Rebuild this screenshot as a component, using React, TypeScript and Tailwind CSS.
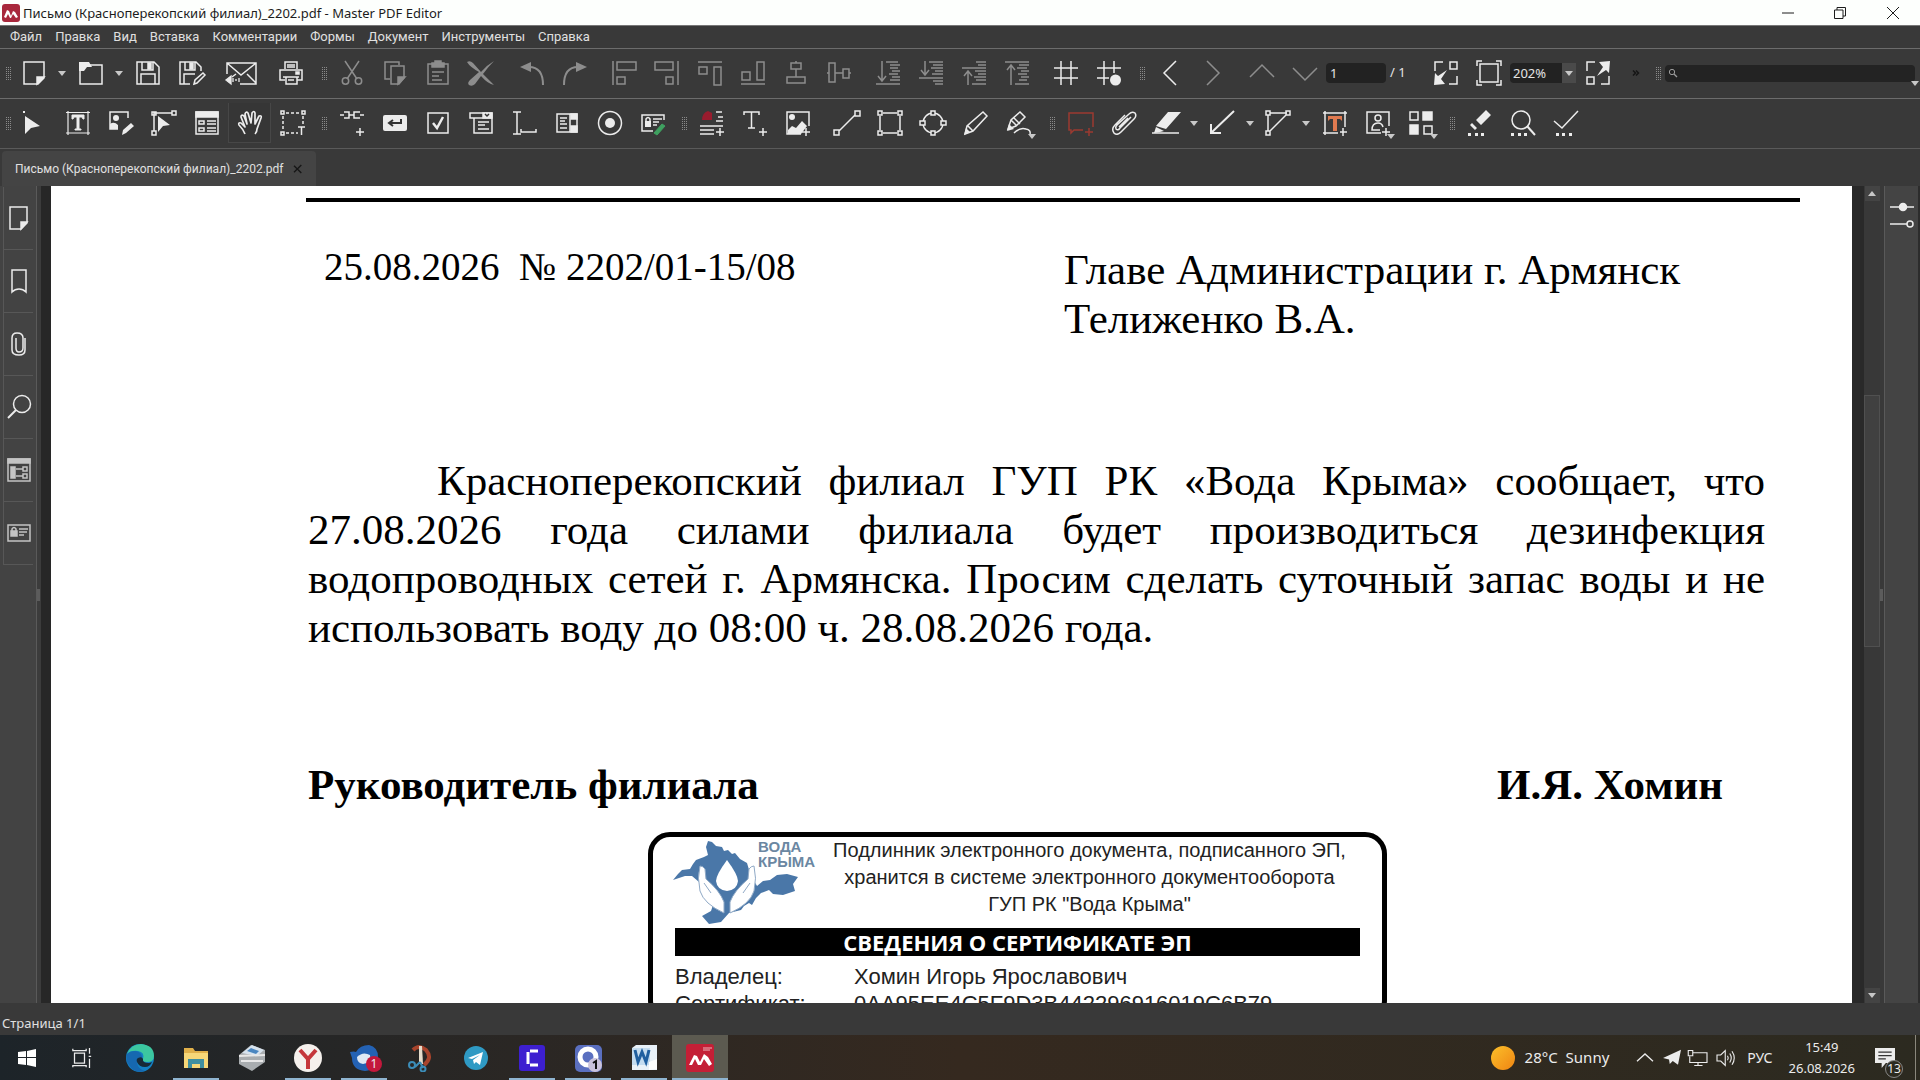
import React, { useState } from 'react';
import clsx from 'clsx';

interface IconProps {
  children: React.ReactNode;
  className?: string;
}

interface Tool {
  label: string;
  icon: React.ReactNode;
  disabled?: boolean;
  width?: string;
  corner?: boolean;
}

const MENU = ['Файл', 'Правка', 'Вид', 'Вставка', 'Комментарии', 'Формы', 'Документ', 'Инструменты', 'Справка'];

function Icon({ children, className = 'w-6 h-6' }: IconProps) {
  return (
    <svg
      viewBox="0 0 24 24"
      fill="none"
      stroke="currentColor"
      strokeWidth="1.5"
      className={clsx('shrink-0 overflow-visible', className)}
      aria-hidden="true"
    >
      {children}
    </svg>
  );
}

// Панель файла
const fileTools: Tool[] = [
  { label: 'Открыть', icon: <Icon><path d="M1 23V4h22v19z" /><path d="M0 1h10l3 5h-5l-3 4H0z" fill="currentColor" stroke="none" /></Icon> },
];

const saveTools: Tool[] = [
  {
    label: 'Сохранить',
    icon: <Icon><path d="M1 1h17l5 5v17H1zM5 23V13h14v10M6 1v8h11V1" /><path d="M12 2h3v6h-3z" fill="currentColor" /></Icon>,
  },
  {
    label: 'Сохранить как',
    icon: <Icon><path d="M11 23H1V1h16l5 5v4M5 23V13h11M6 1v8h10V1" /><path d="M11 2h3v6h-3z" fill="currentColor" /><path d="m15 23 1-4 8-7 2 2-8 8z" /></Icon>,
  },
  {
    label: 'Отправить по почте',
    width: 'w-[57px]',
    icon: <Icon className="h-6 w-[30px]"><path d="M-2 13V2h29v21H11M-2 2l14 12L27 2M18 13l9 9M7 13l-4 3" /><path d="m-3 19 5-4v8zM4 17v4M7 18v2M10 17v4" fill="currentColor" strokeWidth="1.3" /></Icon>,
  },
  {
    label: 'Печать',
    icon: <Icon><path d="M6 8V1h12v7M6 19H1V9h22v10h-5M8 4h8M8 6h8" /><path d="M7 16h11v7H7zM4 16h16M9 19h6" /><path d="M17 11h3v2h-3z" fill="currentColor" /></Icon>,
  },
];

const editTools: Tool[] = [
  {
    label: 'Вырезать',
    disabled: true,
    icon: <Icon><path d="M5 0 17 18M19 0 7 18" /><circle cx="5.500" cy="20" r="3.200" /><circle cx="18.500" cy="20" r="3.200" /></Icon>,
  },
  {
    label: 'Копировать',
    disabled: true,
    icon: <Icon><path d="M7 18H2V1h14v3M8 5h13v12l-5 6H8z" /><path d="m15 23 7-7h-7z" fill="currentColor" /></Icon>,
  },
  {
    label: 'Вставить',
    disabled: true,
    icon: <Icon><path d="M2 3h20v20H2zM6 11h12M6 15h7M6 19h10" /><path d="M6 6V2h3V0h6v2h3v4z" fill="currentColor" /></Icon>,
  },
  {
    label: 'Удалить',
    disabled: true,
    icon: <Icon><path d="M-2 1q3-2 6 1l8 9q6-7 13-11-6 6-11 13l11 11q-6-1-13-9l-6 8q-3 3-6 1-2-2 1-5l9-8Q1 6-2 1z" fill="currentColor" stroke="none" /></Icon>,
  },
];

const historyTools: Tool[] = [
  {
    label: 'Отменить',
    disabled: true,
    icon: <Icon><path d="M9 6q14 0 14 18" strokeWidth="2" /><path d="m0 6 11-5v10z" fill="currentColor" stroke="none" /></Icon>,
  },
  {
    label: 'Повторить',
    disabled: true,
    icon: <Icon><path d="M15 6Q1 6 1 24" strokeWidth="2" /><path d="M24 6 13 1v10z" fill="currentColor" stroke="none" /></Icon>,
  },
];

const alignTools: Tool[] = [
  { label: 'По левому краю', disabled: true, icon: <Icon><path d="M1 0v24M5 1h19v8H5zM5 16h8v7H5z" /></Icon> },
  { label: 'По правому краю', disabled: true, icon: <Icon><path d="M23 0v24M0 1h18v8H0zM11 16h7v7h-7z" /></Icon> },
  { label: 'По верхнему краю', disabled: true, icon: <Icon><path d="M0 1h24M1 6h8v7H1zM16 6h7v18h-7z" /></Icon> },
  { label: 'По нижнему краю', disabled: true, icon: <Icon><path d="M0 23h24M1 11h8v8H1zM16 1h7v18h-7z" /></Icon> },
  { label: 'Центр по вертикали', disabled: true, icon: <Icon><path d="M12 0v2M12 8v8M7 2h10v6H7zM3 16h18v6H3z" /></Icon> },
  { label: 'Центр по горизонтали', disabled: true, icon: <Icon><path d="M0 12h2M8 12h8M22 12h2M2 2h6v19H2zM16 8h6v9h-6z" /></Icon> },
];

const orderTools: Tool[] = [
  {
    label: 'На задний план',
    disabled: true,
    icon: <Icon><path d="M6 0v19M2 15l4 5 4-5M0 23h24M10 1h12M14 4h10M14 7h8M16 10h8M13 13h9M16 16h8M14 19h10" /></Icon>,
  },
  {
    label: 'Переместить назад',
    disabled: true,
    icon: <Icon><path d="M6 0v13M2 9l4 5 4-5M0 17h24M10 1h14M14 4h10M12 7h12M16 10h8M13 13h11M14 20h10M16 23h8" /></Icon>,
  },
  {
    label: 'Переместить вперёд',
    disabled: true,
    icon: <Icon><path d="M6 24V11M2 15l4-5 4 5M0 7h24M14 1h10M16 4h8M13 10h11M16 13h8M12 16h12M14 19h10M10 23h14" /></Icon>,
  },
  {
    label: 'На передний план',
    disabled: true,
    icon: <Icon><path d="M6 24V5M2 9l4-5 4 5M0 1h24M14 4h10M12 7h10M16 10h8M13 13h9M16 16h8M14 19h8M10 23h14" /></Icon>,
  },
];

const gridTools: Tool[] = [
  { label: 'Сетка', icon: <Icon><path d="M7 0v24M17 0v24M0 7h24M0 17h24" /></Icon> },
  {
    label: 'Привязка к сетке',
    icon: <Icon><path d="M7 0v24M17 0v12M0 7h24M0 17h12" /><circle cx="18.500" cy="19" r="5.500" fill="currentColor" stroke="none" /></Icon>,
  },
];

// Панель инструментов
const selectTools: Tool[] = [
  {
    label: 'Выделение',
    icon: <Icon><path d="M2 5v18l6-6 9-2z" fill="currentColor" stroke="none" /><path d="M0 0h2v2H0z" fill="currentColor" stroke="none" /></Icon>,
  },
  {
    label: 'Редактировать текст',
    icon: <Icon><path d="M2 0v24M22 0v24M0 1.500h24M0 22h24" strokeWidth="1.200" /><path d="M6 4h12v4h-1l-1-2h-3v12h2v1H9v-1h2V6H8L7 8H6z" fill="currentColor" strokeWidth="1" /></Icon>,
  },
  {
    label: 'Редактировать изображение',
    icon: <Icon><path d="M9 18H1V1h18v6" /><circle cx="7" cy="7" r="3" fill="currentColor" stroke="none" /><path d="M1 18v-5q4-3 8 1v4zM13 24l1-5 8-7 3 3-8 7z" fill="currentColor" stroke="none" /></Icon>,
  },
  {
    label: 'Редактировать контур',
    icon: <Icon><path d="M2 20V2h18M0 1h4v3H0zM20 0h4v4h-4zM0 20h4v4H0z" /><path d="m6 5 12 9-7 1-5 6z" fill="currentColor" stroke="none" /></Icon>,
  },
  {
    label: 'Редактировать формы',
    icon: <Icon><path d="M1 1h22v22H1z" /><path d="M1 1h22v5H1z" fill="currentColor" /><path d="M4 10h5v3H4zM4 17h5v3H4zM12 10h9M12 13h9M12 17h9M12 20h9" /></Icon>,
  },
];

const handIcon = (
  <Icon>
    <path d="M7 23q-2-5-6-9-1-3 2-2l4 4-4-10q0-3 3-1l3 8L7 3q1-3 3-1l3 10 1-10q2-3 3 0v11l4-8q3-1 2 2l-4 11q0 3-2 5" strokeWidth="1.700" strokeLinejoin="round" />
  </Icon>
);

const formTools: Tool[] = [
  { label: 'Ссылка', icon: <Icon><path d="M0 4h4M9 4h5M20 4h4M4 1h5v6H4M20 1h-6v6h6M20 17v8M16 21h8" /></Icon> },
  {
    label: 'Кнопка',
    icon: <Icon><path d="M2 4h20q2 0 2 2v12q0 2-2 2H2q-2 0-2-2V6q0-2 2-2z" fill="currentColor" stroke="none" /><path d="M18 8v4H7m3-3-4 3 4 3" stroke="#333" strokeWidth="2" /></Icon>,
  },
  { label: 'Флажок', icon: <Icon><path d="M2 2h20v20H2z" /><path d="m7 12 4 5 6-11" strokeWidth="2.500" /></Icon> },
  {
    label: 'Поле со списком',
    icon: <Icon><path d="M1 2h22v5H1zM5 7v15h18V7M9 11h11M9 14h7M9 18h11" /><path d="M14 2h9v5h-9z" fill="currentColor" /><path d="m16 3 2 2 2-2" stroke="#333" /></Icon>,
  },
  { label: 'Текстовое поле', icon: <Icon><path d="M1 1h8M5 1v22M1 23h8M9 18v3h15v-3" /></Icon> },
  {
    label: 'Список',
    icon: <Icon><path d="M2 3h20v18H2zM15 3v18M5 7h7M5 10h5M5 13h7M5 17h7" /><path d="M16 3h6v5h-6zM16 15h6v6h-6z" fill="currentColor" /></Icon>,
  },
  {
    label: 'Переключатель',
    icon: <Icon><circle cx="12" cy="12" r="11.500" /><circle cx="12" cy="12" r="5" fill="currentColor" stroke="none" /></Icon>,
  },
  {
    label: 'Поле подписи',
    icon: <Icon><path d="M12 20H1V4h22v5M12 8h9M12 11h6M12 14h4" /><path d="M4 10h6v6H4z" fill="currentColor" stroke="none" /><path d="M5 10V8q2-3 4 0v2" /><path d="m13 22 8-9 3 2-8 9z" fill="#3fa060" stroke="#3fa060" strokeWidth="1" /></Icon>,
  },
];

const insertTools: Tool[] = [
  {
    label: 'Колонтитулы',
    icon: <Icon><path d="M16 1h6M18 6h5M16 10h7M0 15h23M0 19h14M0 23h14M20 17v8M16 21h8" /><path d="M2 9q0-7 6-9l4 2v7z" fill="#981c2e" stroke="none" /></Icon>,
  },
  { label: 'Вставить текст', icon: <Icon><path d="M1 4V1h15v3M8.500 1v16M5 17h7M20 17v8M16 21h8" /></Icon> },
  {
    label: 'Вставить изображение',
    icon: <Icon><path d="M15 23H1V1h22v14M20 17v8M16 21h8" /><circle cx="6" cy="6" r="3" fill="currentColor" stroke="none" /><path d="M2 23v-4l4-4 4 2 6-7 5 5-6 8z" fill="currentColor" stroke="none" /></Icon>,
  },
];

const shapeTools: Tool[] = [
  { label: 'Линия', icon: <Icon><path d="M4 20 20 4M-1 19h5v5h-5zM20 0h5v5h-5z" /></Icon> },
  { label: 'Прямоугольник', icon: <Icon><path d="M5 2h14M5 22h14M2 5v14M22 5v14M0 0h4v4H0zM20 0h4v4h-4zM0 20h4v4H0zM20 20h4v4h-4z" /></Icon> },
  {
    label: 'Эллипс',
    icon: <Icon><circle cx="12" cy="12" r="10" /><path d="M10 0h4v4h-4zM10 20h4v4h-4zM-1 10h5v4h-5zM20 10h5v4h-5z" fill="#393939" /></Icon>,
  },
  { label: 'Карандаш', icon: <Icon><path d="m1 23 2-8L19 1l4 4L9 20zM4 15l5 5" /><path d="m0 24 2-7 4 4z" fill="currentColor" stroke="none" /></Icon> },
  {
    label: 'Кисть',
    corner: true,
    icon: <Icon><path d="m1 18 3-9 9-8 5 5-9 9zM4 9l6 6M7 7l6 6" /><path d="m0 20 2-7 5 5z" fill="currentColor" stroke="none" /><path d="M7 22q6-6 12-4 5 1 4 5" /></Icon>,
  },
];

const noteTools: Tool[] = [
  { label: 'Заметка', icon: <Icon className="w-6 h-6 text-[#9c3a30]"><path d="M14 19H5l-3 3v-3H0V2h24v14M20 17v8M16 21h8" /></Icon> },
  {
    label: 'Вложить файл',
    icon: <Icon><path d="M19 6 8 17q-2 3-4 1-1-2 1-4L17 3q3-3 6-1 2 3-1 6L9 21q-4 4-7 1-3-4 1-8L13 4M16 7l-9 9" /></Icon>,
  },
];

const stampTools: Tool[] = [
  {
    label: 'Текст-заметка',
    icon: <Icon><path d="M2 0v24M22 0v16M0 2h24M0 22h15M20 17v8M17 21h7" /><path d="M5 5h14v5l-2-2h-3v12h-4V8H7l-2 2z" fill="#e07a50" stroke="none" /></Icon>,
  },
  {
    label: 'Штамп',
    corner: true,
    icon: <Icon><path d="M15 22H1V1h22v14M20 17v8M16 21h8" /><circle cx="12" cy="7" r="3" /><path d="M14 19H6q0-7 6-7 4 0 5 4" /></Icon>,
  },
  {
    label: 'Предметы',
    corner: true,
    icon: <Icon><path d="M1 1h8v8H1zM15 15h8v8h-8z" /><path d="M14 1h9v8h-9zM1 14h8v9H1z" fill="currentColor" /></Icon>,
  },
];

const extraTools: Tool[] = [
  {
    label: 'Ластик',
    icon: <Icon><path d="m8 9 10-10 5 5-10 10zM2 14l2-2 5 5-2 2z" fill="currentColor" stroke="none" /><path d="M0 22h3v3H0zM7 22h3v3H7zM13 22h3v3h-3z" fill="currentColor" stroke="none" /></Icon>,
  },
  {
    label: 'Найти отличия',
    icon: <Icon><circle cx="10" cy="9" r="9" /><path d="m16 15 8 9" strokeWidth="2" /><path d="M0 22h3v3H0zM7 22h3v3H7zM13 22h3v3h-3z" fill="currentColor" stroke="none" /></Icon>,
  },
  {
    label: 'Проверка',
    icon: <Icon><path d="m0 10 8 7L24 0" /><path d="M2 22h3v3H2zM8 22h3v3H8zM15 22h3v3h-3z" fill="currentColor" stroke="none" /></Icon>,
  },
];

const sideTabs: Tool[] = [
  { label: 'Страницы', icon: <Icon><path d="M3 1h17v16l-6 6H3z" /><path d="M14 23v-7h6z" fill="currentColor" /></Icon> },
  { label: 'Закладки', icon: <Icon><path d="M5 1h14v22q-3-3-7-3t-7 3z" /></Icon> },
  { label: 'Вложения', icon: <Icon><path d="M18 6v12q0 5-6 5-7 0-7-5V6q0-5 5-5 6 0 6 5v10q0 4-4 4-3 0-3-4V6" /></Icon> },
  { label: 'Поиск', icon: <Icon><circle cx="15" cy="9" r="8.500" /><path d="m9 15-8 8" strokeWidth="2" /></Icon> },
  {
    label: 'Поля',
    icon: <Icon className="w-6 h-6 text-[#c4c4c4]"><path d="M1 1h22v22H1z" /><path d="M1 1h22v4H1zM4 9h4v11H4z" fill="currentColor" /><path d="M9 11h7M9 18h7M16 9h4v4h-4zM16 16h4v4h-4z" /></Icon>,
  },
  {
    label: 'Подписи',
    icon: <Icon className="w-6 h-6 text-[#c4c4c4]"><path d="M1 4h22v16H1zM12 8h9M12 11h8M12 14h5" /><path d="M4 10h6v5H4z" fill="currentColor" /><path d="M5 10V8q2-3 4 0v2" /></Icon>,
  },
];

function Grip({ className = 'ml-[10px] mr-[3px]' }: { className?: string }) {
  return (
    <span className={clsx('grid shrink-0 grid-cols-3 gap-px', className)}>
      {[...Array(21)].map((_, i) => (
        <i key={i} className="h-px w-px bg-[#8a8a8a]" />
      ))}
    </span>
  );
}

function Arrow({ className = '' }: { className?: string }) {
  return (
    <svg viewBox="0 0 8 5" className={clsx('h-[5px] w-2 shrink-0 fill-[#c8c8c8]', className)} aria-hidden="true">
      <path d="M0 0h8L4 5z" />
    </svg>
  );
}

function ToolButton({ tool }: { tool: Tool }) {
  return (
    <button
      type="button"
      aria-label={tool.label}
      disabled={tool.disabled}
      className={clsx(
        'relative flex h-full shrink-0 items-center justify-center',
        tool.width || 'w-[43px]',
        tool.disabled ? 'text-[#8d8d8d]' : 'text-[#ececec]'
      )}
    >
      {tool.icon}
      {tool.corner && <Arrow className="absolute right-1 bottom-2" />}
    </button>
  );
}

function ToolGroup({ tools, className = '' }: { tools: Tool[]; className?: string }) {
  return (
    <div className={clsx('flex h-full shrink-0', className)}>
      {tools.map(tool => (
        <ToolButton key={tool.label} tool={tool} />
      ))}
    </div>
  );
}

function DropButton({ label }: { label: string }) {
  return (
    <button type="button" aria-label={label} className="flex h-full w-[14px] shrink-0 items-center justify-center">
      <Arrow />
    </button>
  );
}

function TitleBar() {
  return (
    <header className="flex h-[25px] shrink-0 items-center bg-[#fdfffd] text-[#1c1c1c]">
      <svg viewBox="0 0 18 18" className="ml-[2px] h-[18px] w-[18px]" aria-hidden="true">
        <rect width="18" height="18" rx="3" fill="#a8283c" />
        <path d="m2 13 3-7 2 1 2 5 2-5 2 1 3 5-2 1-3-4-2 4H8l-2-4-2 4z" fill="#fff" />
      </svg>
      <h1 className="ml-[3px] text-[13px] leading-[18px]">Письмо (Красноперекопский филиал)_2202.pdf - Master PDF Editor</h1>
      <div className="ml-auto flex h-full">
        <button type="button" aria-label="Свернуть" className="flex w-[52px] items-center justify-center">
          <Icon className="h-3 w-3"><path d="M0 12h24" strokeWidth="2" /></Icon>
        </button>
        <button type="button" aria-label="Развернуть" className="flex w-[52px] items-center justify-center">
          <Icon className="h-3 w-3"><path d="M1 6h17v17H1zM6 6V1h17v17h-5" strokeWidth="2" /></Icon>
        </button>
        <button type="button" aria-label="Закрыть" className="flex w-[54px] items-center justify-center">
          <Icon className="h-3 w-3"><path d="m0 0 24 24M24 0 0 24" strokeWidth="2" /></Icon>
        </button>
      </div>
    </header>
  );
}

function MainToolbar() {
  const [page, setPage] = useState('1');
  const [zoom, setZoom] = useState('202%');

  return (
    <div className="flex h-[50px] shrink-0 items-center border-b border-[#6c6c6c] pb-px">
      <Grip className="ml-[6px] mr-px" />
      <ToolButton
        tool={{
          label: 'Создать',
          icon: <Icon><path d="M2 1h20v16l-6 6H2z" /><path d="M15 23v-7h7z" fill="currentColor" /></Icon>,
        }}
      />
      <DropButton label="Варианты создания" />
      <ToolGroup tools={fileTools} />
      <DropButton label="Недавние файлы" />
      <ToolGroup tools={saveTools} />
      <Grip />
      <ToolGroup tools={editTools} />
      <ToolGroup tools={historyTools} className="ml-2" />
      <ToolGroup tools={alignTools} className="ml-[6px]" />
      <ToolGroup tools={orderTools} className="ml-[6px]" />
      <ToolGroup tools={gridTools} className="ml-[6px]" />
      <Grip />
      <ToolGroup
        tools={[
          { label: 'Предыдущий вид', icon: <Icon><path d="M18 0 6 12l12 12" /></Icon> },
          { label: 'Следующий вид', disabled: true, icon: <Icon><path d="m6 0 12 12L6 24" /></Icon> },
        ]}
      />
      <ToolGroup
        className="ml-[6px]"
        tools={[
          { label: 'Предыдущая страница', disabled: true, icon: <Icon><path d="m0 16 12-12 12 12" /></Icon> },
          { label: 'Следующая страница', disabled: true, icon: <Icon><path d="m0 7 12 12L24 7" /></Icon> },
        ]}
      />
      <input
        aria-label="Номер страницы"
        value={page}
        onChange={e => setPage(e.target.value)}
        className="h-5 w-[60px] shrink-0 rounded-sm bg-[#222] px-1 text-[13px] text-[#e4e4e4]"
      />
      <span className="w-[38px] shrink-0 pl-1 text-[13px] text-[#e4e4e4]">/ 1</span>
      <ToolGroup
        tools={[
          {
            label: 'Реальный размер',
            icon: <Icon><path d="M1 10V1h8M15 23h8v-8M16 1h7v7h-7z" /><path d="m0 24 1-12 3 3 9-6-6 9 4 5z" fill="currentColor" stroke="none" /></Icon>,
          },
          {
            label: 'По размеру окна',
            icon: <Icon><path d="M3 3h18v18H3zM0 5V0h5M19 0h5v5M24 19v5h-5M5 24H0v-5" /></Icon>,
          },
        ]}
      />
      <div className="relative flex h-5 w-[66px] shrink-0 items-center">
        <select
          aria-label="Масштаб"
          value={zoom}
          onChange={e => setZoom(e.target.value)}
          className="h-full w-full appearance-none rounded-sm bg-[#222] pl-[3px] text-[13px] leading-5 text-[#e4e4e4]"
        >
          <option>100%</option>
          <option>202%</option>
          <option>400%</option>
        </select>
        <span className="pointer-events-none absolute right-0 flex h-5 w-[14px] items-center justify-center bg-[#4a4a4a]">
          <Arrow />
        </span>
      </div>
      <ToolGroup
        tools={[
          {
            label: 'Полный экран',
            icon: <Icon><path d="M1 10V1h8M15 23h8v-8M1 16h7v7H1z" /><path d="m24 0-1 12-3-3-9 6 6-9-4-5z" fill="currentColor" stroke="none" /></Icon>,
          },
        ]}
      />
      <button type="button" aria-label="Ещё" className="w-[34px] shrink-0 text-[#151515]">
        <Icon className="mx-auto h-[6px] w-[6px]"><path d="m0 2 10 10L0 22M12 2l10 10-10 10" strokeWidth="6" /></Icon>
      </button>
      <Grip className="ml-[3px] mr-1" />
      <label className="relative mr-[5px] flex h-[17px] min-w-0 flex-1 items-center rounded-sm bg-[#232323] text-[#9a9a9a]">
        <Icon className="ml-1 h-2 w-2"><circle cx="9" cy="9" r="8" strokeWidth="3" /><path d="m15 15 9 9" strokeWidth="4" /></Icon>
        <input type="search" aria-label="Поиск в документе" className="min-w-0 flex-1 bg-transparent px-1 text-[13px]" />
        <Arrow className="absolute -right-1 -bottom-1" />
      </label>
    </div>
  );
}

function EditToolbar() {
  return (
    <div className="flex h-[50px] shrink-0 items-center border-b border-[#5a5a5a] pb-px">
      <Grip className="ml-[6px] mr-[2px]" />
      <ToolGroup tools={selectTools} />
      <button
        type="button"
        aria-label="Рука"
        className="flex h-10 w-[43px] shrink-0 items-center justify-center border-x border-b border-[#474747] bg-[#363636] text-[#ececec]"
      >
        {handIcon}
      </button>
      <ToolGroup
        tools={[
          {
            label: 'Выделить область',
            icon: <Icon><path d="M5 2h15M5 22h12M2 5v14" strokeDasharray="3 2" /><path d="M22 5v8" strokeDasharray="3 2" /><path d="M0 0h3v3H0zM21 0h3v3h-3zM0 21h3v3H0zM17 16h7M20.500 16v8" /></Icon>,
          },
        ]}
      />
      <Grip className="ml-2 mr-[3px]" />
      <ToolGroup tools={formTools} />
      <Grip className="ml-2 mr-[3px]" />
      <ToolGroup tools={insertTools} />
      <ToolGroup tools={shapeTools} className="ml-[6px]" />
      <Grip className="ml-[10px] mr-1" />
      <ToolGroup tools={noteTools} />
      <ToolButton
        tool={{
          label: 'Выделить текст',
          width: 'w-[42px]',
          icon: <Icon><path d="M2 15 14 1h13L12 18zM2 16l8 4-4 1-6 1z" fill="currentColor" stroke="none" /><path d="M-2 22h27" /></Icon>,
        }}
      />
      <DropButton label="Цвет выделения" />
      <ToolButton tool={{ label: 'Стрелка', width: 'w-[42px]', icon: <Icon><path d="M24 0 1 22M1 13v9h10" strokeWidth="2" /></Icon> }} />
      <DropButton label="Вид стрелки" />
      <ToolButton
        tool={{
          label: 'Многоугольник',
          width: 'w-[42px]',
          icon: <Icon><path d="M2 4v16M4 2h17M20 4 4 20M0 0h4v4H0zM20 0h4v4h-4zM0 20h4v4H0z" /></Icon>,
        }}
      />
      <DropButton label="Вид фигуры" />
      <ToolGroup tools={stampTools} />
      <Grip className="ml-2 mr-[3px]" />
      <ToolGroup tools={extraTools} />
    </div>
  );
}

function SideBar() {
  return (
    <nav className="flex w-[37px] shrink-0 flex-col border-r border-[#5a5a5a] bg-[#434343] pt-px pl-[3px]">
      {sideTabs.map(tab => (
        <button
          key={tab.label}
          type="button"
          aria-label={tab.label}
          className="flex h-[63px] w-[30px] shrink-0 items-center justify-center border-b border-l border-[#575757] text-[#ececec]"
        >
          {tab.icon}
        </button>
      ))}
    </nav>
  );
}

function WaterLogo() {
  return (
    <svg viewBox="0 0 128 88" className="h-[88px] w-32 shrink-0 overflow-visible" aria-hidden="true">
      <path
        d="M-2 43 3 37l4-4 8-1 3-5 3-4 8-3 4-2-2-8 2-6 4 1 4 4 6 1 2 4 4-1 4 4 3-1 5 6 7 4 3 10 7 13 6-5 7-1 7-5 10-1 11 3-5 7 2 7-12 4-10-1-4-4-8 3-5 5-4 7-3-2-5 3-3 4-12 3-8 9-12 2-7-8 9-5 2-6-9-12-5-11-7-6-7 0-6 2z"
        fill="#4a77a8"
      />
      <path d="M52 23Q41 38 41 44q1 9 11 10 10-1 11-10 0-6-11-21z" fill="#fff" />
      <g fill="#fff" stroke="#8fa9c6">
        <path d="M25 29q-3 12 0 25 4 13 24 22V65Q45 54 31 42l-1-10q-2-3-5-3zM29 46l7 10" />
        <path d="M79 29q3 12 0 25-4 13-24 22V65q4-11 18-23l1-10q2-3 5-3zM75 46l-7 10" />
      </g>
    </svg>
  );
}

function Stamp() {
  return (
    <section className="mx-auto mt-[23px] w-[739px] -translate-x-[19px] rounded-[22px] border-[5px] border-black px-[22px] font-['Liberation_Sans'] text-[#222]">
      <div className="flex h-[91px] items-start">
        <div className="relative flex">
          <WaterLogo />
          <p className="absolute top-[2px] left-[83px] text-[15px] leading-[15px] font-bold text-[#6b87a2]">
            ВОДА
            <br />
            КРЫМА
          </p>
        </div>
        <p className="flex-1 pl-4 text-center text-xl leading-[27px] whitespace-nowrap">
          Подлинник электронного документа, подписанного ЭП,
          <br />
          хранится в системе электронного документооборота
          <br />
          ГУП РК &quot;Вода Крыма&quot;
        </p>
      </div>
      <h2 className="bg-black text-center font-['Open_Sans'] text-[22px] leading-7 font-bold text-white">
        СВЕДЕНИЯ О СЕРТИФИКАТЕ ЭП
      </h2>
      <dl className="grid grid-cols-[179px_1fr] pt-[7px] text-[22px] leading-[27px]">
        <dt>Владелец:</dt>
        <dd>Хомин Игорь Ярославович</dd>
        <dt>Сертификат:</dt>
        <dd>0AA95EE4C5F9D3B442296916019C6B79</dd>
      </dl>
    </section>
  );
}

function Letter() {
  return (
    <article className="min-w-0 flex-1 overflow-hidden bg-white pr-[87px] pl-[257px] font-['Liberation_Serif'] text-[43px] leading-[49px] text-black">
      <hr className="mt-3 -mr-[35px] -ml-[2px] border-t-4 border-black" />
      <div className="mt-[43px] flex">
        <p className="w-[756px] pl-4 text-[39px] leading-[44px] whitespace-pre">25.08.2026  № 2202/01-15/08</p>
        <p className="whitespace-nowrap">
          Главе Администрации г. Армянск
          <br />
          Телиженко В.А.
        </p>
      </div>
      <p className="mt-[113px] text-justify indent-[129px]">
        Красноперекопский филиал ГУП РК «Вода Крыма» сообщает, что 27.08.2026 года силами филиала будет производиться
        дезинфекция водопроводных сетей г. Армянска. Просим сделать суточный запас воды и не использовать воду до 08:00
        ч. 28.08.2026 года.
      </p>
      <p className="mt-[108px] mr-[42px] flex justify-between font-bold">
        <span>Руководитель филиала</span>
        <span>И.Я. Хомин</span>
      </p>
      <Stamp />
    </article>
  );
}

function ScrollBar() {
  return (
    <div className="flex w-4 shrink-0 flex-col items-center bg-[#383838]">
      <button type="button" aria-label="Вверх" className="flex h-[15px] w-[15px] items-center justify-center bg-[#444]">
        <Arrow className="rotate-180" />
      </button>
      <div className="flex w-full flex-1 flex-col">
        <div className="grow-[194]" />
        <div className="w-full grow-[251] border border-[#505050] bg-[#404040]" />
        <div className="grow-[341]" />
      </div>
      <button type="button" aria-label="Вниз" className="flex h-[15px] w-[15px] items-center justify-center bg-[#444]">
        <Arrow />
      </button>
    </div>
  );
}

const taskApps = [
  {
    name: 'Edge',
    icon: (
      <svg viewBox="0 0 28 28" className="h-7 w-7">
        <circle cx="14" cy="14" r="14" fill="#1380c4" />
        <path d="M1 10Q5 0 15 0q13 1 13 12 0 6-7 6-5 0-4-3 2-7-5-8Q5 6 1 10z" fill="#3cc7a0" />
        <path d="M1 10q5-5 12-2 4 3 3 6-5 0-5 5 1 6 8 8Q8 30 3 21-1 16 1 10z" fill="#1668b0" />
        <path d="M12 14q4-2 5 1-1 4 6 4l3-1q-2 5-7 5-6 0-8-5-1-3 1-4z" fill="#172a38" />
      </svg>
    ),
  },
  {
    name: 'Проводник',
    open: true,
    icon: (
      <svg viewBox="0 0 28 28" className="h-7 w-7">
        <path d="M2 4h9l2 3h13v17H2z" fill="#e0b04a" />
        <path d="M2 9h24v15H2z" fill="#f6d778" />
        <path d="M6 24V15h16v9h-4v-4h-8v4z" fill="#3f8fa0" />
      </svg>
    ),
  },
  {
    name: 'Сканер',
    icon: (
      <svg viewBox="0 0 28 28" className="h-7 w-7">
        <path d="m1 11 12-10 14 5v12l-13 9L1 20z" fill="#a9adb0" />
        <path d="m4 9 10-8 12 5-7 6z" fill="#d7e3ee" />
        <path d="m9 7 4-3 8 3-3 3z" fill="#4a86c0" />
        <path d="m1 12 26-1M3 17h22" stroke="#e8e8e8" strokeWidth="2" />
      </svg>
    ),
  },
  {
    name: 'Яндекс Браузер',
    open: true,
    icon: (
      <svg viewBox="0 0 28 28" className="h-7 w-7">
        <circle cx="14" cy="14" r="14" fill="#f5f0ec" />
        <path d="m6 6 8 9 8-9M14 14v11" stroke="#c5363a" strokeWidth="4" fill="none" />
      </svg>
    ),
  },
  {
    name: 'Thunderbird',
    open: true,
    badge: '1',
    icon: (
      <svg viewBox="0 0 28 28" className="h-7 w-7">
        <path d="M0 8q4-1 6 0 4-7 13-7 9 2 9 12 0 13-13 14Q2 26 2 14z" fill="#2462b4" />
        <path d="M7 13q6-6 13-2 2 8-7 9-6-1-6-7z" fill="#dfe9f4" />
      </svg>
    ),
  },
  {
    name: 'Ножницы',
    icon: (
      <svg viewBox="0 0 28 28" className="h-7 w-7" fill="none">
        <path d="M7 6q6-6 13 0 7 8-2 15" stroke="#a8442c" strokeWidth="4" />
        <path d="m13 2 3 0 1 18h-4z" fill="#e6dccb" />
        <path d="m14 18-5 5M14 18l3 6" stroke="#3c8db8" strokeWidth="2" />
        <circle cx="6" cy="21" r="3" stroke="#3c8db8" strokeWidth="2" />
        <circle cx="17" cy="25" r="2.500" stroke="#3c8db8" strokeWidth="2" />
      </svg>
    ),
  },
  {
    name: 'Telegram',
    icon: (
      <svg viewBox="0 0 28 28" className="h-7 w-7">
        <circle cx="14" cy="14" r="12" fill="#2f9ac4" />
        <path d="m6 14 15-6-3 13-4-3-2 2-1-4 7-5-8 4z" fill="#fff" />
      </svg>
    ),
  },
  {
    name: 'C',
    open: true,
    icon: (
      <svg viewBox="0 0 28 28" className="h-7 w-7">
        <rect x="1" y="1" width="26" height="26" rx="3" fill="#3d1fd0" />
        <path d="M20 7h-8M10 8v12M12 21h8" stroke="#fff" strokeWidth="3" fill="none" />
      </svg>
    ),
  },
  {
    name: 'Qbittorrent',
    open: true,
    icon: (
      <svg viewBox="0 0 28 28" className="h-7 w-7">
        <rect x="1" y="1" width="27" height="27" rx="5" fill="#5a6fc0" />
        <circle cx="14" cy="13" r="8" fill="none" stroke="#fff" strokeWidth="5" />
        <circle cx="21" cy="21" r="7" fill="#c9c2dc" />
        <path d="m19 19 3-2v8" stroke="#111" strokeWidth="2" fill="none" />
      </svg>
    ),
  },
  {
    name: 'Word',
    open: true,
    icon: (
      <svg viewBox="0 0 28 28" className="h-7 w-7">
        <path d="M2 4 6 1h21v25H2z" fill="#e9f1f8" />
        <path d="M2 4h18v17H2z" fill="#c4dcf0" />
        <path d="m5 6 3 12 4-10 4 10 3-12" stroke="#1f5fa0" strokeWidth="3" fill="none" />
        <path d="m19 18 8-3v10l-8 1z" fill="#fff" />
      </svg>
    ),
  },
  {
    name: 'Master PDF Editor',
    open: true,
    active: true,
    icon: (
      <svg viewBox="0 0 28 28" className="h-7 w-7">
        <rect x="0" y="0" width="28" height="28" rx="3" fill="#c41f36" />
        <path d="m3 21 5-10 3 1 3 6 4-8 4 3 4 7-3 2-5-7-3 6h-3l-3-6-3 6z" fill="#fff" />
        <path d="M17 4h9M17 6h7" stroke="#eeb5bb" />
      </svg>
    ),
  },
];

function TaskBar() {
  return (
    <footer className="flex h-[45px] shrink-0 items-stretch bg-linear-to-r from-[#1d2429] via-[#35291f] to-[#2c2a20] text-[#ececec]">
      <button type="button" aria-label="Пуск" className="flex w-[54px] items-center justify-center">
        <svg viewBox="0 0 18 18" className="h-[18px] w-[18px] fill-white">
          <path d="m0 3 8-1v6H0zM9 2l9-2v8H9zM0 9h8v7l-8-1zM9 9h9v9l-9-2z" />
        </svg>
      </button>
      <button type="button" aria-label="Представление задач" className="mr-[2px] flex w-14 items-center justify-center">
        <Icon className="h-5 w-5"><path d="M3 6h12v12H3zM1 1v2h16V1M1 23v-2h16v2M21 0v7M21 13v11M20 10h3" /></Icon>
      </button>
      {taskApps.map(app => (
        <button
          key={app.name}
          type="button"
          aria-label={app.name}
          className={clsx('relative flex w-14 items-center justify-center', app.active && 'bg-[#5c5a50]')}
        >
          {app.icon}
          {app.badge && (
            <span className="absolute right-[10px] bottom-2 flex h-4 w-4 items-center justify-center rounded-full bg-[#c4183c] text-xs">
              {app.badge}
            </span>
          )}
          {app.open && (
            <span className={clsx('absolute bottom-0 h-[2px] bg-[#8fb4d0]', app.active ? 'w-full' : 'w-[46px]')} />
          )}
        </button>
      ))}
      <div className="ml-auto flex items-center">
        <span className="h-6 w-6 rounded-full bg-linear-to-br from-[#fbc02a] to-[#ee8412]" />
        <span className="ml-[10px] text-[15px]">28°C</span>
        <span className="ml-2 text-[15px]">Sunny</span>
        <Icon className="ml-7 h-4 w-4"><path d="m0 17 12-11 12 11" strokeWidth="2" /></Icon>
        <Icon className="ml-[10px] h-[18px] w-[18px]"><path d="m0 12 24-11-4 20-7-5-4 4-1-6z" fill="currentColor" stroke="none" /></Icon>
        <Icon className="ml-2 h-[18px] w-[18px]"><path d="M5 5h19v13H1V10M-1 2h6v7h-6zM12 18v4M7 22h11" /></Icon>
        <Icon className="ml-[10px] h-[18px] w-[18px]"><path d="M0 8h5l6-6v20l-6-6H0zM14 9q2 3 0 6M17 6q4 6 0 12M20 3q6 9 0 18" /></Icon>
        <span className="ml-3 text-sm">РУС</span>
        <time className="ml-4 text-center text-[13px] leading-[21px]">
          15:49
          <br />
          26.08.2026
        </time>
        <button type="button" aria-label="Уведомления" className="relative ml-5 h-6 w-6">
          <Icon className="h-5 w-5"><path d="M0 0h24v18H13l-5 6v-6H0z" fill="currentColor" stroke="none" /><path d="M4 5h16M4 9h16M4 13h9" stroke="#333" strokeWidth="1.500" /></Icon>
          <span className="absolute -right-1 -bottom-2 flex h-[18px] w-[18px] items-center justify-center rounded-full border border-[#888] bg-[#2c2a20] text-xs">
            13
          </span>
        </button>
        <span className="mr-1 ml-4 h-[45px] w-px bg-[#8a877c]" />
      </div>
    </footer>
  );
}

export default function App() {
  return (
    <div className="flex h-screen flex-col overflow-hidden bg-[#393939] font-['Noto_Sans',sans-serif] text-[#e0e0e0]">
      <TitleBar />
      <nav className="flex h-6 shrink-0 items-center gap-[13px] border-t border-b border-t-[#777] border-b-[#6c6c6c] pl-[10px] font-['Roboto'] text-[13px] leading-5">
        {MENU.map(item => (
          <button key={item} type="button">
            {item}
          </button>
        ))}
      </nav>
      <MainToolbar />
      <EditToolbar />

      {/* Вкладки документов */}
      <div className="flex h-[37px] shrink-0 pt-[2px] pl-[2px]">
        <div className="flex w-[314px] items-center rounded-t-sm bg-[#444] pl-[13px] font-['Roboto'] text-xs">
          <span className="whitespace-nowrap">Письмо (Красноперекопский филиал)_2202.pdf</span>
          <button type="button" aria-label="Закрыть вкладку" className="ml-[10px] text-[#161616]">
            <Icon className="h-2 w-2"><path d="m0 2 22 22M22 0 0 22" strokeWidth="4" /></Icon>
          </button>
        </div>
      </div>

      <main className="flex min-h-0 flex-1">
        <SideBar />
        <div className="flex w-[14px] shrink-0 items-center bg-[#272727]">
          <span className="flex h-full w-1 items-center bg-[#3c3c3c]">
            <span className="h-3 w-[3px] bg-[#5c5c5c]" />
          </span>
        </div>
        <Letter />
        <div className="w-3 shrink-0 bg-[#292929]" />
        <ScrollBar />
        <div className="flex w-[5px] shrink-0 items-center border-r border-[#5a5a5a]">
          <span className="h-3 w-[3px] bg-[#5c5c5c]" />
        </div>
        <aside className="w-[35px] shrink-0 border-r-2 border-[#2c2c2c] bg-[#444]">
          <button type="button" aria-label="Свойства" className="flex h-[58px] w-full items-center justify-center text-[#ececec]">
            <Icon><path d="M0 4h24M0 21h17" /><circle cx="13" cy="4" r="3.500" fill="currentColor" /><circle cx="20" cy="21" r="3" /></Icon>
          </button>
        </aside>
      </main>

      <div className="flex h-8 shrink-0 items-center pt-2 pl-[2px] text-[13px] leading-5">Страница 1/1</div>
      <TaskBar />
    </div>
  );
}
